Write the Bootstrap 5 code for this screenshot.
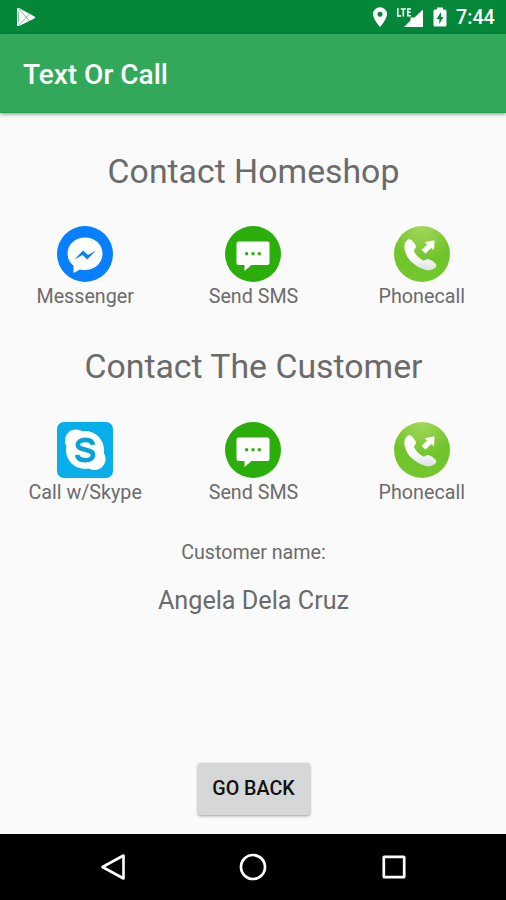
<!DOCTYPE html>
<html lang="en">
<head>
<meta charset="utf-8">
<meta name="viewport" content="width=device-width, initial-scale=1">
<title>Text Or Call</title>
<link href="https://cdn.jsdelivr.net/npm/bootstrap@5.3.0/dist/css/bootstrap.min.css" rel="stylesheet">
<style>
body{font-family:Roboto,"Liberation Sans",sans-serif;background:#fafafa;color:#6b6b6b;height:900px;overflow:hidden}
svg{display:block;flex:none}
main{padding-left:1px}
.status-bar{height:34px;background:#048738;color:#fff;padding:0 10px 0 15px}
.clock{font-size:19.7px;font-weight:500;line-height:34px;width:40px;margin:2px 0 0 9px;white-space:nowrap}
.app-bar{height:79px;background:#32a95a;padding:4px 23px 0;box-shadow:0 1px 4px rgba(0,0,0,.45);border-bottom:1px solid #22a04c}
.app-title{font-size:28px;font-weight:500;color:#fff;line-height:40px;white-space:nowrap}
.section-title{font-size:33.8px;font-weight:400;line-height:40px;white-space:nowrap}
.first-title{margin-top:39px}
.second-title{margin-top:38px}
.actions{margin-top:34px}
.actions-lower{margin-top:35px}
.action{color:inherit}
.action-label{font-size:19.7px;line-height:24px;margin-top:3px;white-space:nowrap}
.customer-label{font-size:19.7px;line-height:24px;margin-top:36px}
.customer-name{font-size:25.2px;line-height:32px;margin-top:20px}
.back-btn{width:112px;height:52px;margin-bottom:19px;background:#d6d7d7;color:#111;font-size:19.7px;font-weight:500;line-height:52px;border-radius:3px;padding:0;border:0;box-shadow:0 1px 3px rgba(0,0,0,.4);white-space:nowrap}
.nav-keys{height:66px;background:#000;padding-left:1px}
.key-back{padding-right:43px}
.key-recent{padding-left:44px}
</style>
</head>
<body class="d-flex flex-column">
<svg width="0" height="0" class="position-absolute" aria-hidden="true">
  <defs>
    <radialGradient id="lime" cx=".5" cy="0" r="1"><stop offset="0" stop-color="#a4d85c"/><stop offset=".4" stop-color="#84cb3c"/><stop offset=".62" stop-color="#70c42b"/><stop offset="1" stop-color="#74c82e"/></radialGradient>
    <linearGradient id="handset" x1="0" y1="0" x2="0" y2="1"><stop offset=".5" stop-color="#fff"/><stop offset="1" stop-color="#dcdfe2"/></linearGradient>
    <symbol id="sms" viewBox="0 0 56 56">
      <circle cx="28" cy="28" r="28" fill="#2bae0b"/>
      <path d="M13.500 15.500h29q2 0 2 2v19.500q0 2-2 2H26.500l-7 6v-6h-6q-2 0-2-2V17.500q0-2 2-2z" fill="#fff"/>
      <path d="M20.200 26.300h3v3h-3zM26.500 26.300h3v3h-3zM32.800 26.300h3v3h-3z" fill="#2bae0b"/>
    </symbol>
    <symbol id="phone" viewBox="0 0 56 56">
      <circle cx="28" cy="28" r="28" fill="url(#lime)"/>
      <path d="M13 14.200Q15.500 12.300 18 14.500Q21.500 18 22 20.500Q22 22 19.800 24.500Q21.500 30 29.500 34.800Q32.500 32.800 34.500 33Q39.500 34.500 42.300 38.500Q42.800 40 41 42Q37 45.500 31.500 44Q22.500 41.500 15.500 34Q10.500 27.500 10.300 20.500Q10.600 16.200 13 14.200z" fill="url(#handset)"/>
      <path d="M27.500 23.800l5.700-5-2.700-2.500L40.600 14.200l-.6 10-2.800-2.300-5.700 5.500z" fill="#fff"/>
    </symbol>
  </defs>
</svg>

<header>
  <div class="status-bar d-flex align-items-center">
    <svg width="21" height="22" viewBox="0 0 21 22"><path d="M2 2h2l15.500 8.500q1.500 1 0 2L4 20H2z" fill="#fff"/><path d="M3.500 2.500L14.500 15M3.500 19.500L14.500 8M3.500 5.500V16" stroke="#048738" stroke-width=".8" fill="none" opacity=".65"/></svg>
    <svg class="ms-auto" width="16" height="22" viewBox="0 0 16 22"><path fill="#fff" fill-rule="evenodd" d="M8 1.200a7 7 0 0 0-7 7C1 13 8 21 8 21s7-8 7-12.800a7 7 0 0 0-7-7zm0 4.500a2.500 2.500 0 1 1 0 5 2.500 2.500 0 0 1 0-5z"/></svg>
    <svg width="29" height="24" viewBox="0 0 29 24" class="ms-2"><path d="M27 4.500v17.500H8L14.500 15.500V12.500H18.500z" fill="#fff"/><path d="M1.800 3v8h3.400M4.800 4h5M7.300 4v7.500M15 4h-3.200v6.700H15M12 7.300h2.700" stroke="#fff" stroke-width="1.600" fill="none"/></svg>
    <svg width="14" height="22" viewBox="0 0 14 22" class="ms-2"><path d="M4 1.500h6v2h2q1.500 0 1.500 1.500v14q0 1.500-1.500 1.500H2Q.5 20.500.5 19V5Q.5 3.500 2 3.500h2z" fill="#fff"/><path d="M8 6L3.500 13H6.300v5L10.500 11H8z" fill="#048738"/></svg>
    <div class="clock">7:44</div>
  </div>
  <div class="app-bar d-flex align-items-center"><h1 class="app-title m-0">Text Or Call</h1></div>
</header>

<main class="flex-grow-1 d-flex flex-column align-items-center text-center">
  <h2 class="section-title first-title mb-0">Contact Homeshop</h2>
  <div class="row g-0 w-100 actions">
    <div class="col-4 action d-flex flex-column align-items-center">
      <svg width="56" height="56" viewBox="0 0 56 56"><circle cx="28" cy="28" r="28" fill="#087fff"/><path d="M28 11.500c-10 0-17.500 7-17.500 16.200 0 5 2.300 9 6 12v7.300l6.500-3.500c1.600.4 3.300.5 5 .5 10 0 17.500-7 17.500-16.300S38 11.500 28 11.500z" fill="#fff"/><path d="M17.500 33.500L26 24.500l5 4.500 8-4.500-8.800 9-4.700-4.600z" fill="#087fff"/></svg>
      <div class="action-label">Messenger</div>
    </div>
    <div class="col-4 action d-flex flex-column align-items-center">
      <svg width="56" height="56"><use href="#sms"/></svg>
      <div class="action-label">Send SMS</div>
    </div>
    <div class="col-4 action d-flex flex-column align-items-center">
      <svg width="56" height="56"><use href="#phone"/></svg>
      <div class="action-label">Phonecall</div>
    </div>
  </div>

  <h2 class="section-title second-title mb-0">Contact The Customer</h2>
  <div class="row g-0 w-100 actions-lower">
    <div class="col-4 action d-flex flex-column align-items-center">
      <svg width="56" height="56" viewBox="0 0 56 56"><rect width="56" height="56" rx="7" fill="#08aeea"/><g fill="#fff"><circle cx="28" cy="28" r="19"/><circle cx="19" cy="18.500" r="11"/><circle cx="37.500" cy="37" r="11"/></g><path d="M36 22.800C35.500 19.400 32.500 17.900 28.200 17.900C23.600 17.900 20.800 20 20.800 22.700C20.800 25.700 24 26.700 28.500 27.700C33 28.700 36 29.700 36 33C36 36.300 33 38.200 28.300 38.200C23.600 38.200 20.600 36.400 20.100 32.900" fill="none" stroke="#08a2da" stroke-width="4.600"/></svg>
      <div class="action-label">Call w/Skype</div>
    </div>
    <div class="col-4 action d-flex flex-column align-items-center">
      <svg width="56" height="56"><use href="#sms"/></svg>
      <div class="action-label">Send SMS</div>
    </div>
    <div class="col-4 action d-flex flex-column align-items-center">
      <svg width="56" height="56"><use href="#phone"/></svg>
      <div class="action-label">Phonecall</div>
    </div>
  </div>

  <div class="customer-label">Customer name:</div>
  <div class="customer-name">Angela Dela Cruz</div>
  <button type="button" class="btn back-btn mt-auto">GO BACK</button>
</main>

<nav class="nav-keys row g-0 align-items-center" aria-label="System navigation">
  <div class="col-4 key-back d-flex justify-content-end"><svg width="26" height="30" viewBox="0 0 26 30"><path d="M23.500 3.500v23L2.500 15z" fill="none" stroke="#fff" stroke-width="2.600" stroke-linejoin="round"/></svg></div>
  <div class="col-4 d-flex justify-content-center"><svg width="30" height="30" viewBox="0 0 30 30"><circle cx="15" cy="15" r="12" fill="none" stroke="#fff" stroke-width="2.700"/></svg></div>
  <div class="col-4 key-recent d-flex"><svg width="24" height="24" viewBox="0 0 24 24"><rect x="1.800" y="1.800" width="20.400" height="20.400" rx=".5" fill="none" stroke="#fff" stroke-width="2.700"/></svg></div>
</nav>
<script src="https://cdn.jsdelivr.net/npm/bootstrap@5.3.0/dist/js/bootstrap.bundle.min.js"></script>
</body>
</html>
